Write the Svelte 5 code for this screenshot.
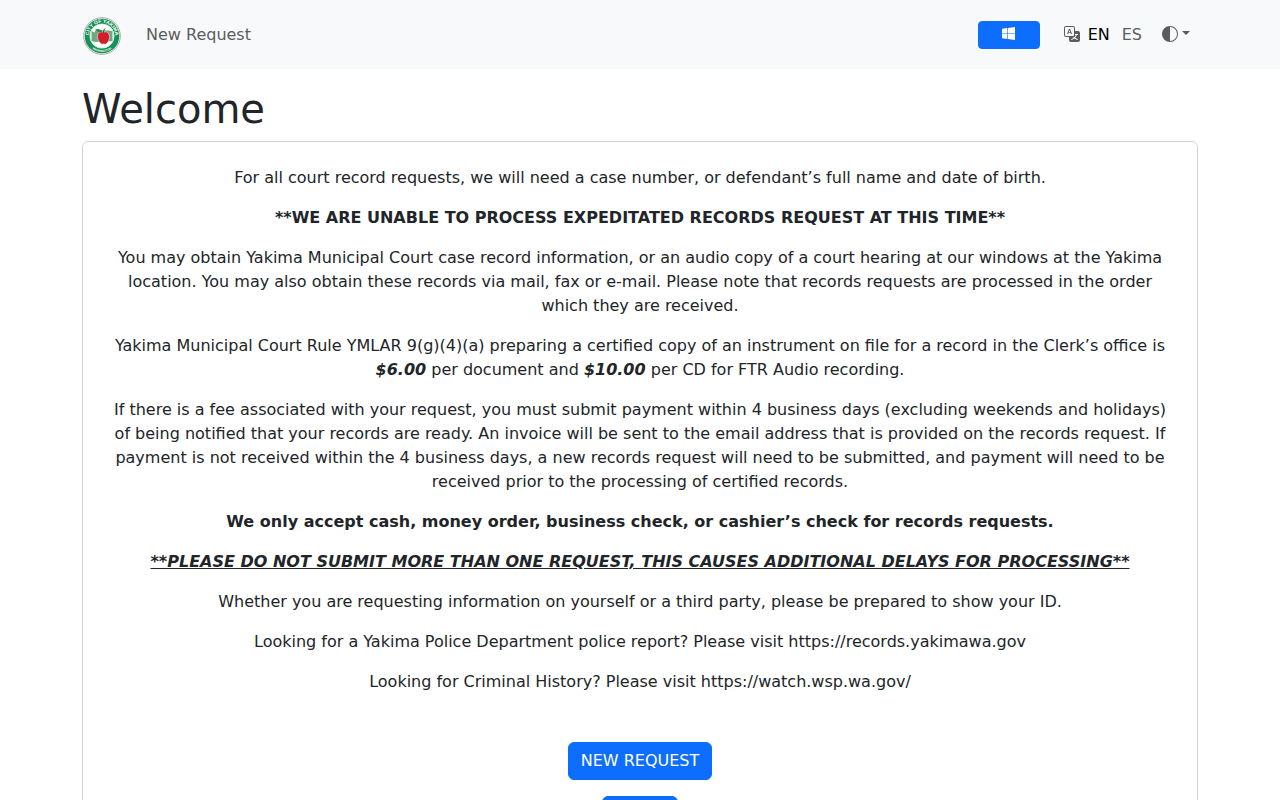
<script>
    const languages = ["EN", "ES"];

    let language = $state("EN");
    let dark = $state(false);
</script>

<div class="page" class:dark>
    <header>
        <nav class="container navbar">
            <a class="brand" href="#home" aria-label="City of Yakima">
                <svg width="40" height="40" viewBox="0 0 40 40">
                    <defs>
                        <path id="seal-top" d="M6.8 20a13.2 13.2 0 0 1 26.4 0" />
                        <path id="seal-bottom" d="M4 20a16 16 0 0 0 32 0" />
                    </defs>
                    <circle cx="20" cy="20" r="18.3" fill="#fff" stroke="#a9aaa4" stroke-width="1" />
                    <circle cx="20" cy="20" r="14.8" fill="none" stroke="#159257" stroke-width="5" />
                    <circle cx="20" cy="20" r="12" fill="#fff" stroke="#c4dccf" stroke-width=".6" />
                    <path d="M9.5 15l3 1.5 1-2.5 13 .5 4 .5v10l-4 .5-13 .5-4-1z" fill="#6daa83" />
                    <path d="M21.5 16.5c-2-1.5-6-.7-6 4 0 4 3 7.7 4.8 7.7.7 0 1-.4 1.4-.4s.8.4 1.5.4c2 0 4.3-4 4.3-7.5 0-4.7-4-5.7-6-4.2z" fill="#d01f2b" stroke="#fff" stroke-width=".5" />
                    <path d="M20.5 15.5c-2.5-3-5.5-3-7-2 2 3 5 3.3 7 2z" fill="#258c50" />
                    <path d="M21.5 17c0-2 .4-3.5 1.5-4.5" fill="none" stroke="#5b3524" stroke-width="1" />
                    <text class="seal-text"><textPath href="#seal-top" startOffset="50%">CITY OF YAKIMA</textPath></text>
                    <text class="seal-text small"><textPath href="#seal-bottom" startOffset="50%">WASHINGTON</textPath></text>
                </svg>
            </a>
            <a class="nav-link" href="#new-request">New Request</a>

            <div class="tools">
                <button class="btn btn-windows" aria-label="Sign in with Microsoft">
                    <svg width="13" height="15" viewBox="0 0 16 16" fill="currentColor">
                        <path d="M6.555 1.375 0 2.237v5.45h6.555V1.375zM0 13.795l6.555.933V8.313H0v5.482zm7.278-5.4.026 6.378L16 16V8.395H7.278zM16 0 7.33 1.244v6.414H16V0z" />
                    </svg>
                </button>
                <div class="languages">
                    <svg width="16" height="16" viewBox="0 0 16 16" fill="currentColor">
                        <path d="M4.545 6.714 4.11 8H3l1.862-5h1.284L8 8H6.833l-.435-1.286H4.545zm1.634-.736L5.5 3.956h-.049l-.679 2.022H6.18z" />
                        <path d="M0 2a2 2 0 0 1 2-2h7a2 2 0 0 1 2 2v3h3a2 2 0 0 1 2 2v7a2 2 0 0 1-2 2H7a2 2 0 0 1-2-2v-3H2a2 2 0 0 1-2-2V2zm2-1a1 1 0 0 0-1 1v7a1 1 0 0 0 1 1h7a1 1 0 0 0 1-1V2a1 1 0 0 0-1-1H2zm7.138 9.995c.193.301.402.583.63.846-.748.575-1.673 1.001-2.768 1.292.178.217.451.635.555.867 1.125-.359 2.08-.844 2.886-1.494.777.665 1.739 1.165 2.93 1.472.133-.254.414-.673.629-.89-1.125-.253-2.057-.694-2.82-1.284.681-.747 1.222-1.651 1.621-2.757H14V8h-3v1.047h.765c-.318.844-.74 1.546-1.272 2.13a6.066 6.066 0 0 1-.415-.492 1.988 1.988 0 0 1-.94.31z" />
                    </svg>
                    {#each languages as code}
                        <button class="lang" class:active={language === code} onclick={() => language = code}>{code}</button>
                    {/each}
                </div>
                <button class="theme" aria-label="Toggle theme" onclick={() => dark = !dark}>
                    <svg width="16" height="16" viewBox="0 0 16 16" fill="currentColor">
                        <path d="M8 15A7 7 0 1 0 8 1v14zm0 1A8 8 0 1 1 8 0a8 8 0 0 1 0 16z" />
                    </svg>
                    <span class="caret"></span>
                </button>
            </div>
        </nav>
    </header>

    <main class="container">
        <h1>Welcome</h1>
        <section class="card">
            <p>For all court record requests, we will need a case number, or defendant’s full name and date of birth.</p>
            <p><strong>**WE ARE UNABLE TO PROCESS EXPEDITATED RECORDS REQUEST AT THIS TIME**</strong></p>
            <p>You may obtain Yakima Municipal Court case record information, or an audio copy of a court hearing at our windows at the Yakima location. You may also obtain these records via mail, fax or e-mail. Please note that records requests are processed in the order which they are received.</p>
            <p>Yakima Municipal Court Rule YMLAR 9(g)(4)(a) preparing a certified copy of an instrument on file for a record in the Clerk’s office is <strong><em>$6.00</em></strong> per document and <strong><em>$10.00</em></strong> per CD for FTR Audio recording.</p>
            <p>If there is a fee associated with your request, you must submit payment within 4 business days (excluding weekends and holidays) of being notified that your records are ready. An invoice will be sent to the email address that is provided on the records request. If payment is not received within the 4 business days, a new records request will need to be submitted, and payment will need to be received prior to the processing of certified records.</p>
            <p><strong>We only accept cash, money order, business check, or cashier’s check for records requests.</strong></p>
            <p><strong><em><u>**PLEASE DO NOT SUBMIT MORE THAN ONE REQUEST, THIS CAUSES ADDITIONAL DELAYS FOR PROCESSING**</u></em></strong></p>
            <p>Whether you are requesting information on yourself or a third party, please be prepared to show your ID.</p>
            <p>Looking for a Yakima Police Department police report? Please visit https://records.yakimawa.gov</p>
            <p>Looking for Criminal History? Please visit https://watch.wsp.wa.gov/</p>

            <div class="actions">
                <a class="btn" href="#new-request">NEW REQUEST</a>
                <a class="btn" href="#login">LOGIN</a>
            </div>
        </section>
    </main>
</div>

<style>
    :global(body) {
        margin: 0;
    }

    .page {
        --bg: #fff;
        --bar: #f8f9fa;
        --text: #212529;
        --muted: #5a5c5e;
        --active: #000;
        --border: #d3d3d4;
        min-height: 100vh;
        background-color: var(--bg);
        color: var(--text);
        font-family: "DejaVu Sans", sans-serif;
        font-size: 16px;
        line-height: 24px;
    }

    .page.dark {
        --bg: #212529;
        --bar: #2b3035;
        --text: #dee2e6;
        --muted: #a6abb0;
        --active: #fff;
        --border: #495057;
    }

    .container {
        box-sizing: border-box;
        max-width: 1140px;
        margin: 0 auto;
        padding: 0 12px;
    }

    header {
        background-color: var(--bar);
    }

    .navbar {
        display: flex;
        align-items: center;
        min-height: 69px;
    }

    .brand {
        display: flex;
        margin-right: 16px;
        padding-top: 3px;
    }

    .seal-text {
        fill: #fff;
        font-family: "Liberation Sans", sans-serif;
        font-size: 5px;
        font-weight: bold;
        text-anchor: middle;
    }

    .seal-text.small {
        font-size: 3px;
    }

    .nav-link {
        padding: 8px;
        color: var(--muted);
        text-decoration: none;
    }

    .tools {
        display: flex;
        align-items: center;
        margin-left: auto;
        color: var(--muted);
    }

    .btn {
        padding: 6px 12px;
        border: 1px solid #0d6efd;
        border-radius: 6px;
        background-color: #0d6efd;
        color: #fff;
        text-decoration: none;
        cursor: pointer;
    }

    .btn:hover {
        background-color: #0b5ed7;
    }

    .btn-windows {
        display: flex;
        align-items: center;
        justify-content: center;
        width: 62px;
        height: 28px;
        margin-right: 24px;
        border-radius: 4px;
    }

    .languages {
        display: flex;
        align-items: center;
        gap: 12px;
        margin-right: 20px;
    }

    .languages svg {
        margin-right: -4px;
    }

    .tools svg {
        padding-bottom: 2px;
    }

    .lang, .theme {
        padding: 0;
        border: none;
        background: none;
        color: inherit;
        font: inherit;
        cursor: pointer;
    }

    .lang.active {
        color: var(--active);
    }

    .theme {
        display: flex;
        align-items: center;
        gap: 4px;
        margin-right: 8px;
    }

    .caret {
        margin-bottom: 3px;
        border-top: 4px solid;
        border-left: 4px solid transparent;
        border-right: 4px solid transparent;
    }

    h1 {
        margin: 0;
        padding: 16px 0 8px;
        font-size: 40px;
        font-weight: 400;
        line-height: 48px;
    }

    .card {
        padding: 24px;
        border: 1px solid var(--border);
        border-radius: 6px;
        text-align: center;
    }

    p {
        margin: 0 0 16px;
    }

    .actions {
        display: flex;
        flex-direction: column;
        align-items: center;
        gap: 16px;
        padding-top: 32px;
    }
</style>
